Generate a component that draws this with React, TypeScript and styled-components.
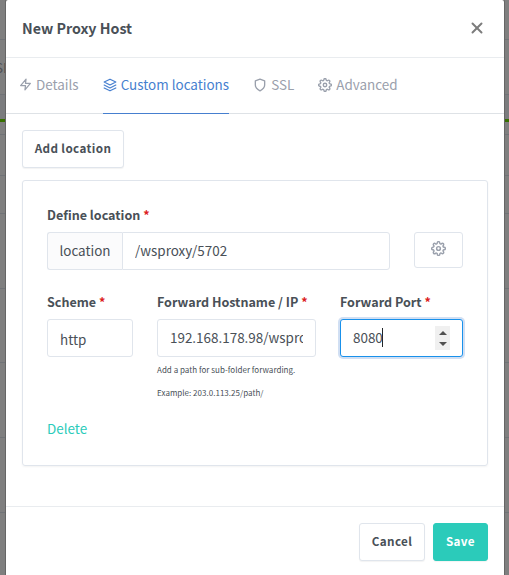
import React from "react";
import styled, { createGlobalStyle, css } from "styled-components";
import { FiLayers, FiSettings, FiShield, FiX, FiZap } from "react-icons/fi";

const border = "#e0e5ec";

const GlobalStyle = createGlobalStyle`
	* {
		box-sizing: border-box;
	}
	body {
		margin: 0;
		overflow: hidden;
		color: #495057;
		font-family: "Noto Sans CJK SC", "Noto Sans", sans-serif;
		font-size: 13.44px;
		line-height: 22px;
	}
`;

const Page = styled.div`
	position: relative;
	width: 509px;
	height: 575px;
	overflow: hidden;
	background: #7b7c7e;
`;

const PageRow = styled.div<{ $height: number; $line?: string; $thick?: number; $bg?: string }>`
	display: flex;
	align-items: center;
	height: ${(p) => p.$height}px;
	white-space: nowrap;
	color: #4f5257;
	background: ${(p) => p.$bg ?? "#7f7f7f"};
	border-bottom: ${(p) => p.$thick ?? 1}px solid ${(p) => p.$line ?? "#707377"};
`;

const PageText = styled.span`
	margin-left: -5px;
`;

const Modal = styled.div`
	position: absolute;
	top: 0;
	left: 6px;
	width: 498px;
	height: 575px;
	display: flex;
	flex-direction: column;
	background: #fff;
	border-radius: 2px 2px 0 0;
	box-shadow: 0 0 0 1px #666;
`;

const Header = styled.header`
	display: flex;
	justify-content: space-between;
	align-items: center;
	height: 58px;
	padding: 0 18px 1px 16px;
	border-bottom: 1px solid #e9ecef;
`;

const Title = styled.h5`
	margin: 0;
	padding-bottom: 1px;
	font-size: 14.25px;
	font-weight: 700;
	line-height: 24px;
`;

const Close = styled.button`
	display: flex;
	padding: 0;
	border: 0;
	background: none;
	color: #7c7c7c;
`;

const Tabs = styled.nav`
	display: flex;
	gap: 24px;
	height: 56px;
	padding-left: 13px;
	border-bottom: 1px solid #dee2e6;
`;

const Tab = styled.a<{ $active?: boolean }>`
	display: flex;
	align-items: center;
	gap: 4px;
	height: 56px;
	padding-bottom: 4px;
	white-space: nowrap;
	color: #9aa0ac;
	border-bottom: 1px solid transparent;

	> svg {
		position: relative;
		top: 1px;
	}

	${(p) =>
		p.$active &&
		css`
			color: #467fcf;
			border-bottom-color: #467fcf;
		`}
`;

const Body = styled.div`
	flex: 1;
	padding: 16px 16px 0;
`;

const Button = styled.button<{ $width: number; $primary?: boolean }>`
	width: ${(p) => p.$width}px;
	height: 38px;
	padding: 0 0 2px;
	border: 1px solid ${(p) => (p.$primary ? "#2bcbba" : border)};
	border-radius: 3px;
	background: ${(p) => (p.$primary ? "#2bcbba" : "#fff")};
	box-shadow: 0 1px 1px rgba(0, 0, 0, 0.05);
	color: ${(p) => (p.$primary ? "#fff" : "#495057")};
	font: 700 11.7px/20px "Noto Sans CJK SC", sans-serif;
	letter-spacing: 0.36px;
	white-space: nowrap;
`;

const Card = styled.section`
	height: 286px;
	margin-top: 12px;
	padding: 24px;
	border: 1px solid ${border};
	border-radius: 3px;
	box-shadow: 0 1px 2px rgba(0, 0, 0, 0.05);
`;

const Row = styled.div<{ $columns: string; $top?: number }>`
	display: grid;
	grid-template-columns: ${(p) => p.$columns};
	column-gap: 24px;
	align-items: start;
	margin-top: ${(p) => p.$top ?? 0}px;
`;

const Label = styled.label`
	display: block;
	height: 21px;
	margin-bottom: 6px;
	font-size: 12.55px;
	font-weight: 700;
	line-height: 19px;
	white-space: nowrap;

	> span {
		color: #dc1f1f;
	}
`;

const fieldBox = css`
	width: 100%;
	height: 38px;
	border: 1px solid ${border};
	border-radius: 3px;
	background: #fff;
`;

const Input = styled.input`
	${fieldBox}
	padding: 0 12px 3px;
	color: #495057;
	font: inherit;
	outline: none;
`;

const Select = styled.div`
	${fieldBox}
	padding: 8px 12px 0;
`;

const InputGroup = styled.div`
	display: flex;

	> input {
		flex: 1;
		min-width: 0;
		border-radius: 0 3px 3px 0;
	}
`;

const Prepend = styled.span`
	display: flex;
	align-items: center;
	justify-content: center;
	width: 75px;
	height: 38px;
	padding-bottom: 2px;
	border: 1px solid ${border};
	border-right: 0;
	border-radius: 3px 0 0 3px;
	background: #fbfbfc;
`;

const GearButton = styled.button`
	display: flex;
	align-items: center;
	justify-content: center;
	height: 36px;
	margin-top: 27px;
	padding: 0 0 3px;
	border: 1px solid ${border};
	border-radius: 3px;
	background: #fff;
	color: #9aa0ac;
`;

const PortField = styled.div`
	${fieldBox}
	display: flex;
	align-items: center;
	justify-content: space-between;
	padding: 0 12px;
	border-color: #1991eb;
	box-shadow: 0 0 0 2px rgba(70, 127, 207, 0.25);
`;

const PortValue = styled.span`
	width: 30px;
	height: 19px;
	margin-bottom: 1px;
	line-height: 18px;
	border-right: 1px solid #212529;
`;

const Spinner = styled.span`
	display: flex;
	flex-direction: column;
	align-items: center;
	justify-content: space-between;
	width: 15px;
	height: 24px;
	padding: 5px 0 4px;
	background: #f0f0f0;
`;

const Hint = styled.p`
	height: 12px;
	margin: 7px 0 11px;
	font-size: 8px;
	line-height: 12px;
	letter-spacing: 0.02px;
	white-space: nowrap;
`;

const Delete = styled.a`
	display: block;
	margin-top: 7px;
	color: #2bcbba;
`;

const Footer = styled.footer`
	display: flex;
	justify-content: flex-end;
	gap: 8px;
	height: 69px;
	padding: 16px 16px 0;
	border-top: 1px solid #e9ecef;
`;

interface Field {
	label: string;
	children: React.ReactNode;
}

const Field = ({ label, children }: Field) => {
	return (
		<div>
			<Label>
				{label} <span>*</span>
			</Label>
			{children}
		</div>
	);
};

export default function App() {
	return (
		<>
			<GlobalStyle />
			<Page>
				<PageRow $height={40} />
				<PageRow $height={55}>
					<PageText>SL</PageText>
				</PageRow>
				<PageRow $height={27} $bg="#7b7c7e" $line="#377000" $thick={3} />
				<PageRow $height={13} />
				<PageRow $height={41} />
				<PageRow $height={38} />
				<PageRow $height={75} />
				<PageRow $height={74} />
				<PageRow $height={75} />
				<PageRow $height={75} />
				<PageRow $height={75} />

				<Modal>
					<Header>
						<Title>New Proxy Host</Title>
						<Close aria-label="Close">
							<FiX size={18} strokeWidth={2.6} />
						</Close>
					</Header>
					<Tabs>
						<Tab>
							<FiZap size={13} strokeWidth={2.3} />
							Details
						</Tab>
						<Tab $active>
							<FiLayers size={14} />
							Custom locations
						</Tab>
						<Tab>
							<FiShield size={14} strokeWidth={2.3} />
							SSL
						</Tab>
						<Tab>
							<FiSettings size={14} strokeWidth={2.3} />
							Advanced
						</Tab>
					</Tabs>
					<Body>
						<Button $width={102}>Add location</Button>
						<Card>
							<Row $columns="343px 49px">
								<Field label="Define location">
									<InputGroup>
										<Prepend>location</Prepend>
										<Input defaultValue="/wsproxy/5702" />
									</InputGroup>
								</Field>
								<GearButton aria-label="Settings">
									<FiSettings size={15} strokeWidth={2.3} />
								</GearButton>
							</Row>
							<Row $columns="86px 159px 123px" $top={22}>
								<Field label="Scheme">
									<Select>http</Select>
								</Field>
								<Field label="Forward Hostname / IP">
									<Input defaultValue="192.168.178.98/wsproxy" />
									<Hint>Add a path for sub-folder forwarding.</Hint>
									<Hint>Example: 203.0.113.25/path/</Hint>
								</Field>
								<Field label="Forward Port">
									<PortField>
										<PortValue>8080</PortValue>
										<Spinner>
											<svg width="8" height="4" viewBox="0 0 8 4">
												<path d="M0 4L4 0L8 4Z" fill="#505050" />
											</svg>
											<svg width="8" height="4" viewBox="0 0 8 4">
												<path d="M0 0L4 4L8 0Z" fill="#505050" />
											</svg>
										</Spinner>
									</PortField>
								</Field>
							</Row>
							<Delete>Delete</Delete>
						</Card>
					</Body>
					<Footer>
						<Button $width={66}>Cancel</Button>
						<Button $width={55} $primary>
							Save
						</Button>
					</Footer>
				</Modal>
			</Page>
		</>
	);
}
